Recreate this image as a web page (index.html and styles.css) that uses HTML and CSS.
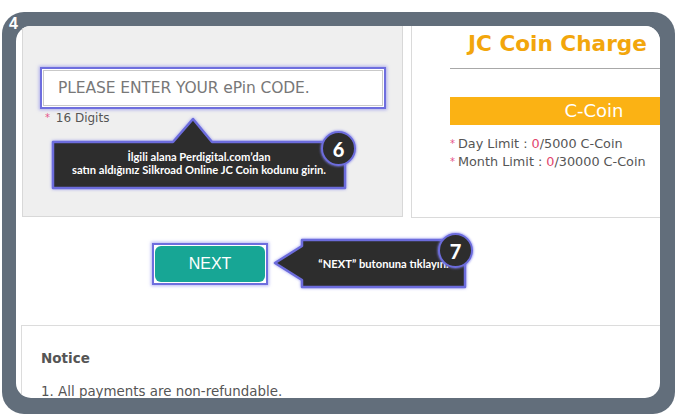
FILE: index.html
```html
<!DOCTYPE html>
<html>
<head>
<meta charset="utf-8">
<link rel="stylesheet" href="styles.css">
</head>
<body>
<div class="frame">
  <div class="step">4</div>
  <div class="screen">
    <div class="top-row">
      <div class="pin-panel">
        <div class="hl input-hl">
          <div class="pin-input">PLEASE ENTER YOUR ePin CODE.</div>
        </div>
        <div class="hint"><span class="star">*</span> 16 Digits</div>
      </div>
      <div class="coin-panel">
        <div class="coin-title">JC Coin Charge</div>
        <div class="coin-rule"></div>
        <div class="coin-bar">C-Coin</div>
        <div class="limits">
          <div class="limit"><span class="star">*</span>Day Limit : <span class="zero">0</span>/5000 C-Coin</div>
          <div class="limit"><span class="star">*</span>Month Limit : <span class="zero">0</span>/30000 C-Coin</div>
        </div>
      </div>
    </div>
    <div class="btn-row">
      <div class="hl btn-hl"><div class="next-btn">NEXT</div></div>
    </div>
    <div class="notice">
      <div class="notice-title">Notice</div>
      <div class="notice-item">1. All payments are non-refundable.</div>
    </div>

    <div class="callout callout-6">
      <svg class="callout-shape" width="298" height="76" viewBox="0 0 298 76">
        <path d="M3,27 H123 L143,4 L162,27 H295 V73 H3 Z" />
      </svg>
      <div class="callout-text text-6">
        <div>İlgili alana Perdigital.com’dan</div>
        <div>satın aldığınız Silkroad Online JC Coin kodunu girin.</div>
      </div>
    </div>
    <div class="badge badge-6">6</div>

    <div class="callout callout-7">
      <svg class="callout-shape" width="196" height="53" viewBox="0 0 196 53">
        <path d="M30,3 H193 V50 H30 V43 L3,26 L30,9 Z" />
      </svg>
      <div class="callout-text text-7">“NEXT” butonuna tıklayın.</div>
    </div>
    <div class="badge badge-7">7</div>
  </div>
</div>
</body>
</html>
```

FILE: styles.css
```css
html, body {
  margin: 0;
  padding: 0;
  background: #ffffff;
}

body {
  font-family: "DejaVu Sans", Verdana, sans-serif;
  color: #555555;
}

.frame {
  position: relative;
  box-sizing: border-box;
  width: 673px;
  height: 402px;
  margin: 12px 0 0 2px;
  padding: 14px 15px 16px 14px;
  background: #626e7b;
  border-radius: 22px;
}

.step {
  position: absolute;
  left: 7px;
  top: 3px;
  color: #ffffff;
  font-family: "Liberation Sans", Arial, sans-serif;
  font-weight: bold;
  font-size: 16px;
}

.screen {
  position: relative;
  height: 100%;
  background: #ffffff;
  border-radius: 15px;
  overflow: hidden;
}

.top-row {
  display: flex;
  gap: 8px;
  padding-left: 6px;
  height: 192px;
}

.pin-panel {
  box-sizing: border-box;
  flex: 0 0 381px;
  height: 191px;
  background: #efefef;
  border: 1px solid #d8d8d8;
  border-top: none;
  padding: 41px 0 0 17px;
}

.hl {
  box-sizing: border-box;
  border: 2px solid #6e6ede;
  box-shadow: 0 0 3px 1px rgba(120, 120, 235, 0.55);
  background: #ffffff;
}

.input-hl {
  width: 346px;
  height: 42px;
  padding: 1px;
}

.pin-input {
  box-sizing: border-box;
  height: 100%;
  border: 1px solid #c9c9c9;
  background: #ffffff;
  color: #787878;
  font-size: 15.5px;
  line-height: 34px;
  padding-left: 14px;
  letter-spacing: -0.1px;
  white-space: nowrap;
}

.hint {
  margin: 2px 0 0 5px;
  font-size: 12px;
  color: #555;
}

.star {
  color: #e6528a;
  font-size: 10px;
  margin-right: 2px;
  vertical-align: 1px;
}

.coin-panel {
  box-sizing: border-box;
  flex: 0 0 340px;
  height: 192px;
  border: 1px solid #dadada;
  border-top: none;
  background: #ffffff;
}

.coin-title {
  margin: 5px 0 0 56px;
  color: #f2a60c;
  font-weight: bold;
  font-size: 21.6px;
  line-height: 26px;
  white-space: nowrap;
}

.coin-rule {
  margin: 11px 0 0 38px;
  height: 1px;
  background: #a8a8a8;
}

.coin-bar {
  margin: 28px 0 0 38px;
  width: 288px;
  height: 28px;
  background: #fbb214;
  color: #ffffff;
  font-size: 18px;
  line-height: 28px;
  text-align: center;
}

.limits {
  margin: 10px 0 0 38px;
  font-size: 12.8px;
  line-height: 18px;
  color: #555;
  white-space: nowrap;
}

.limits .star {
  margin-right: 3px;
}

.zero {
  color: #e2456d;
}

.btn-row {
  padding: 25px 0 0 136px;
  height: 42px;
}

.btn-hl {
  width: 116px;
  height: 42px;
  padding: 1px;
}

.next-btn {
  height: 100%;
  background: #17a695;
  border-radius: 6px;
  color: #ffffff;
  font-family: "Liberation Sans", Arial, sans-serif;
  font-size: 16px;
  line-height: 36px;
  text-align: center;
}

.notice {
  margin: 40px 0 0 5px;
  border-top: 1px solid #dcdcdc;
  border-left: 1px solid #dcdcdc;
  padding: 23px 0 0 19px;
  height: 200px;
}

.notice-title {
  font-weight: bold;
  font-size: 13.5px;
  line-height: 18px;
  color: #555;
}

.notice-item {
  margin-top: 16px;
  font-size: 13.4px;
  line-height: 18px;
  color: #555;
  white-space: nowrap;
}

.callout {
  position: absolute;
}

.callout-shape {
  position: absolute;
  left: 0;
  top: 0;
  overflow: visible;
}

.callout-shape path {
  fill: #2d2d2d;
  stroke: #6c6cdc;
  stroke-width: 2.5;
  stroke-linejoin: round;
  filter: drop-shadow(0 0 1.5px rgba(130, 130, 240, 0.8));
}

.callout-text {
  position: absolute;
  color: #ffffff;
  font-family: Lato, "Open Sans", sans-serif;
  font-weight: bold;
  font-size: 11.2px;
  line-height: 13px;
  text-align: center;
  white-space: nowrap;
}

.callout-6 {
  left: 34px;
  top: 89px;
  width: 298px;
  height: 76px;
}

.text-6 {
  left: 3px;
  top: 35px;
  width: 292px;
}

.callout-7 {
  left: 256px;
  top: 211px;
  width: 196px;
  height: 53px;
}

.text-7 {
  left: 30px;
  top: 20px;
  width: 163px;
}

.badge {
  position: absolute;
  box-sizing: border-box;
  width: 35px;
  height: 35px;
  border-radius: 50%;
  background: #2d2d2d;
  border: 2.5px solid #6c6cdc;
  box-shadow: 0 0 2px 1px rgba(130, 130, 240, 0.6);
  color: #ffffff;
  font-family: Lato, "Open Sans", sans-serif;
  font-weight: 900;
  font-size: 20px;
  display: flex;
  align-items: center;
  justify-content: center;
}

.badge-6 {
  left: 305px;
  top: 105px;
}

.badge-7 {
  left: 422px;
  top: 207px;
}
```
